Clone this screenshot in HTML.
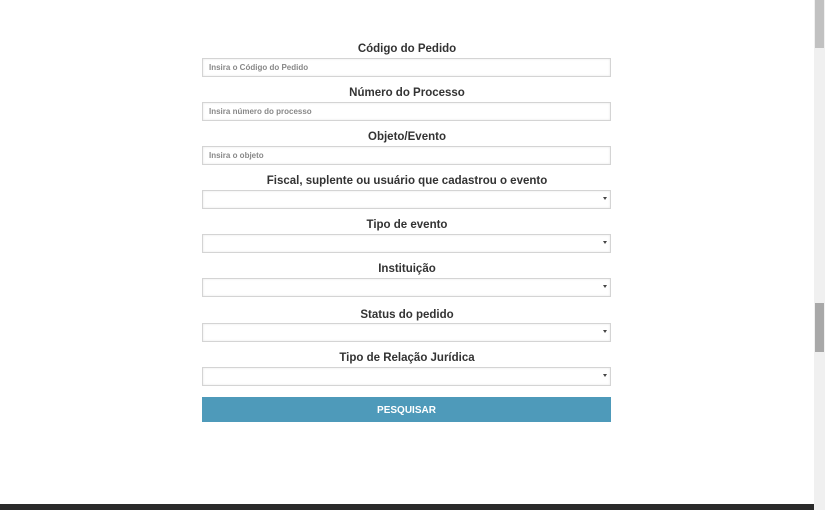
<!DOCTYPE html>
<html><head><meta charset="utf-8"><style>
body{margin:0;width:825px;height:510px;overflow:hidden;background:#fff;font-family:"Liberation Sans",sans-serif;position:relative}
.lab{position:absolute;left:202px;width:410px;text-align:center;font-size:11.5px;font-weight:bold;color:#333}
.inp{position:absolute;left:202px;width:407px;height:17px;border:1px solid #d4d4d4;box-shadow:inset 0 0 2px #e6e6e6;font-size:8px;color:#888;line-height:17px;font-weight:bold}
.inp span{margin-left:6px}
.arr{position:absolute;right:3px;top:6px;width:0;height:0;border-left:2px solid transparent;border-right:2px solid transparent;border-top:3px solid #444}
</style></head><body>
<div class="lab" style="top:43px">Código do Pedido</div>
<div class="inp" style="top:58px"><span>Insira o Código do Pedido</span></div>
<div class="lab" style="top:87px">Número do Processo</div>
<div class="inp" style="top:102px"><span>Insira número do processo</span></div>
<div class="lab" style="top:131px">Objeto/Evento</div>
<div class="inp" style="top:146px"><span>Insira o objeto</span></div>
<div class="lab" style="top:175px">Fiscal, suplente ou usuário que cadastrou o evento</div>
<div class="inp" style="top:190px"><div class="arr"></div></div>
<div class="lab" style="top:219px">Tipo de evento</div>
<div class="inp" style="top:234px"><div class="arr"></div></div>
<div class="lab" style="top:263px">Instituição</div>
<div class="inp" style="top:278px"><div class="arr"></div></div>
<div class="lab" style="top:309px">Status do pedido</div>
<div class="inp" style="top:323px"><div class="arr"></div></div>
<div class="lab" style="top:352px">Tipo de Relação Jurídica</div>
<div class="inp" style="top:367px"><div class="arr"></div></div>
<div style="position:absolute;left:202px;top:397px;width:409px;height:25px;background:#4e9aba;color:#fff;font-size:10px;font-weight:bold;text-align:center;line-height:27px">PESQUISAR</div>
<div style="position:absolute;left:0;top:504px;width:814px;height:6px;background:#2a2a2a"></div>
<div style="position:absolute;left:814px;top:0;width:11px;height:510px;background:#f0f0f0"></div>
<div style="position:absolute;left:815px;top:0;width:9px;height:48px;background:#c1c1c1"></div>
<div style="position:absolute;left:815px;top:303px;width:9px;height:49px;background:#a8a8a8"></div>
</body></html>
